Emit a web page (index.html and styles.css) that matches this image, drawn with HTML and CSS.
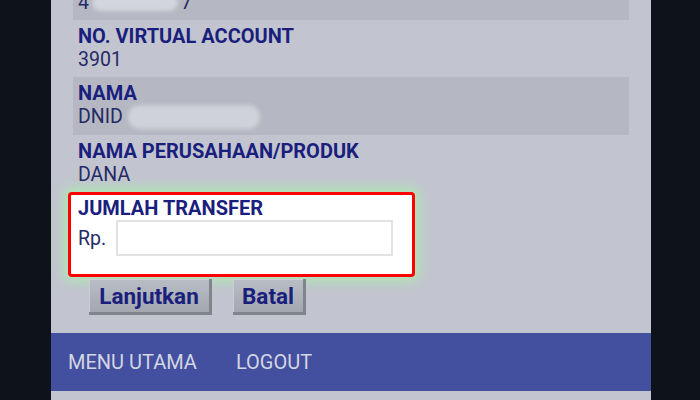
FILE: index.html
```html
<!DOCTYPE html>
<html lang="id">
<head>
  <meta charset="UTF-8" />
  <meta name="viewport" content="width=device-width, initial-scale=1.0" />
  <title>Transfer Virtual Account</title>
  <link rel="stylesheet" href="styles.css">
</head>
<body>
  <div class="screen">
    <div class="detail-list">
      <div class="detail-row shaded">
        <div class="detail-label">NO. REKENING</div>
        <div class="detail-value">4<span class="masked masked-short"></span>7</div>
      </div>
      <div class="detail-row">
        <div class="detail-label">NO. VIRTUAL ACCOUNT</div>
        <div class="detail-value">3901</div>
      </div>
      <div class="detail-row shaded">
        <div class="detail-label">NAMA</div>
        <div class="detail-value">DNID <span class="masked masked-long"></span></div>
      </div>
      <div class="detail-row">
        <div class="detail-label">NAMA PERUSAHAAN/PRODUK</div>
        <div class="detail-value">DANA</div>
      </div>
    </div>

    <div class="amount-box">
      <div class="detail-label">JUMLAH TRANSFER</div>
      <div class="amount-field">
        <span class="currency">Rp.</span>
        <input class="amount-input" type="text" />
      </div>
    </div>

    <div class="actions">
      <button class="action-button btn-next">Lanjutkan</button>
      <button class="action-button btn-cancel">Batal</button>
    </div>

    <div class="bottom-nav">
      <a class="nav-link" href="#">MENU UTAMA</a>
      <a class="nav-link" href="#">LOGOUT</a>
    </div>
  </div>
</body>
</html>
```

FILE: styles.css
```css
body {
  margin: 0;
  background-color: #0e131b;
  font-family: "Roboto", "Liberation Sans", sans-serif;
  overflow: hidden;
}

.screen {
  width: 600px;
  height: 100vh;
  margin-left: 51px;
  background-color: #c2c5cf;
  overflow: hidden;
}

/* daftar detail, sudah digulir sedikit ke atas */
.detail-list {
  margin-top: -37px;
  padding: 0 22px;
}

.detail-row {
  padding: 5px 5px 6px;
}

.detail-row.shaded {
  background-color: #b5b8c2;
}

.detail-label {
  font-size: 20px;
  line-height: 23px;
  font-weight: bold;
  color: #1a1e7c;
}

.detail-value {
  font-size: 19.5px;
  line-height: 23px;
  color: #262a66;
}

.masked {
  display: inline-block;
  height: 17px;
  vertical-align: -2px;
  border-radius: 9px;
  background-color: #d3d5dc;
  filter: blur(2px);
}

.masked-short {
  width: 86px;
  margin: 0 3px;
}

.masked-long {
  width: 132px;
  height: 24px;
  vertical-align: -6px;
  border-radius: 12px;
  background-color: #d0d2d9;
}

.amount-box {
  width: 347px;
  margin-left: 17px;
  padding: 2px 0 18px 7px;
  box-sizing: border-box;
  background-color: #ffffff;
  border: 3px solid #ff0000;
  border-radius: 4px;
  box-shadow: 0 0 12px 4px rgba(170, 240, 170, 0.8);
}

.amount-field {
  display: flex;
  align-items: center;
  gap: 10px;
}

.currency {
  font-size: 19.5px;
  color: #262a66;
}

.amount-input {
  width: 277px;
  height: 36px;
  box-sizing: border-box;
  border: 2px solid #e2e2e2;
  background: #ffffff;
  outline: none;
}

.actions {
  display: flex;
  gap: 21px;
  margin: 2px 0 0 38px;
}

.action-button {
  height: 36px;
  padding: 0;
  font-family: "Roboto", "Liberation Sans", sans-serif;
  font-size: 22.5px;
  font-weight: bold;
  color: #1a1e7c;
  background: linear-gradient(to bottom, #b9bdc5, #a3a7b0);
  border: none;
  border-right: 3px solid #80848c;
  border-bottom: 3px solid #80848c;
  box-shadow: inset 1px 1px 0 #c9ccd3;
}

.btn-next {
  width: 123px;
}

.btn-cancel {
  width: 73px;
}

.bottom-nav {
  display: flex;
  align-items: center;
  gap: 39px;
  height: 58px;
  margin-top: 18px;
  padding-left: 17px;
  background-color: #434f9f;
}

.nav-link {
  font-size: 20px;
  color: #d3d6e3;
  text-decoration: none;
}
```
